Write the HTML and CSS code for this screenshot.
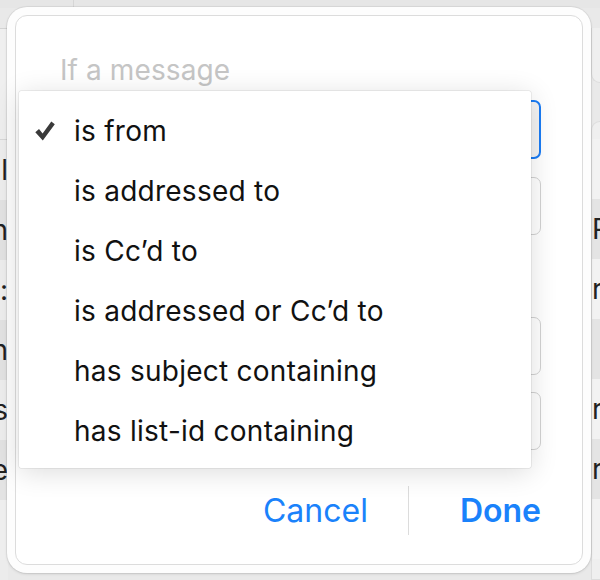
FILE: index.html
```html
<!DOCTYPE html>
<html>
<head>
<meta charset="utf-8">
<link rel="stylesheet" href="styles.css">
</head>
<body>
<div class="window">
  <div class="topbar"><div class="tb-left"></div><div class="tb-rest"></div></div>
  <div class="content">
    <div class="side left">
      <div class="head"></div>
      <div class="block"></div>
      <div class="row light"><span>.l</span></div>
      <div class="row dark"><span>n</span></div>
      <div class="row light"><span>n:</span></div>
      <div class="row dark"><span>n</span></div>
      <div class="row light"><span>s</span></div>
      <div class="row dark"><span>e</span></div>
      <div class="row light"><span></span></div>
    </div>
    <div class="mid"></div>
    <div class="side right">
      <div class="card top"></div>
      <div class="card body">
        <div class="row light"><span></span></div>
        <div class="row dark"><span>Re</span></div>
        <div class="row light"><span>r</span></div>
        <div class="row dark"><span></span></div>
        <div class="row light"><span>r</span></div>
        <div class="row dark"><span>rk</span></div>
        <div class="row light"><span></span></div>
      </div>
    </div>
  </div>
</div>

<div class="dialog">
  <div class="panel">
    <div class="label">If a message</div>
    <div class="field focus f1"></div>
    <div class="field f2"></div>
    <div class="field f3"></div>
    <div class="field f4"></div>
    <div class="actions">
      <span class="btn cancel">Cancel</span>
      <span class="divider"></span>
      <span class="btn done">Done</span>
    </div>
  </div>
</div>

<div class="menu">
  <div class="item checked">
    <svg class="check" viewBox="0 0 20 20" width="20" height="20"><path d="M0.3 11.3 L4 8 L7.6 12.4 L16.3 0.6 L19.8 3.3 L7.8 19.6 Z" fill="#3a3a3a"/></svg>
    <span>is from</span>
  </div>
  <div class="item"><span class="nocheck"></span><span>is addressed to</span></div>
  <div class="item"><span class="nocheck"></span><span>is Cc’d to</span></div>
  <div class="item"><span class="nocheck"></span><span>is addressed or Cc’d to</span></div>
  <div class="item"><span class="nocheck"></span><span>has subject containing</span></div>
  <div class="item"><span class="nocheck"></span><span>has list-id containing</span></div>
</div>
</body>
</html>
```

FILE: styles.css
```css
html, body {
  margin: 0;
  padding: 0;
}
body {
  width: 600px;
  height: 580px;
  overflow: hidden;
  position: relative;
  background: #e9e9e9;
  font-family: Inter, "Noto Sans", sans-serif;
}

.window {
  display: flex;
  flex-direction: column;
  height: 580px;
}
.topbar {
  height: 8px;
  display: flex;
  background: #e6e6e6;
}
.tb-left {
  width: 73px;
  border-right: 1px solid #d6d6d6;
}
.tb-rest { flex: 1; }

.content {
  flex: 1;
  display: flex;
}
.side {
  display: flex;
  flex-direction: column;
  overflow: hidden;
}
.side.left {
  width: 8px;
  background: #ececec;
}
.side.left .head {
  height: 20px;
  border-bottom: 1px solid #d3d3d3;
  background: #e9e9e9;
}
.side.left .block {
  height: 110px;
  border-bottom: 1px solid #d8d8d8;
  background: #efefef;
}
.row {
  height: 60px;
  flex: none;
  display: flex;
  align-items: center;
  white-space: nowrap;
  font-size: 28px;
  color: #222;
}
.row.light { background: #eeeeee; }
.row.dark { background: #e3e3e3; }
.side.left .row { justify-content: flex-end; }

.mid { flex: 1; }

.side.right {
  width: 9px;
  padding-left: 2px;
}
.card {
  background: #efefef;
  border: 1px solid #dcdcdc;
  border-right: none;
}
.card.top {
  margin-top: 20px;
  height: 54px;
  border-radius: 0 0 0 10px;
  border-top: none;
}
.card.body {
  margin-top: 38px;
  border-radius: 10px 0 0 0;
  flex: 1;
  overflow: hidden;
  padding-top: 17px;
}
.card .row.light { background: #f2f2f2; }
.card .row.dark { background: #e4e4e4; }

/* dialog */
.dialog {
  position: absolute;
  left: 7px;
  top: 7px;
  width: 584px;
  height: 566px;
  box-sizing: border-box;
  padding: 8px;
  background: #fdfdfd;
  border-radius: 20px;
  box-shadow: 0 0 0 1px rgba(0,0,0,0.05), 0 1px 3px rgba(0,0,0,0.12);
}
.panel {
  height: 100%;
  box-sizing: border-box;
  border: 1px solid #dcdcdc;
  border-radius: 12px;
  background: #fff;
  padding: 37px 41px 0 44px;
  display: flex;
  flex-direction: column;
}
.label {
  height: 34px;
  line-height: 34px;
  font-size: 28px;
  color: #c5c5c5;
  letter-spacing: 0.1px;
}
.field {
  box-sizing: border-box;
  border: 1px solid #d2d2d2;
  border-radius: 7px;
  background: #fff;
  height: 58px;
}
.field.focus {
  border: 2.5px solid #1a7cf5;
  height: 59px;
  margin-top: 13px;
  background: #f4f4f4;
}
.f2 { margin-top: 18px; }
.f3 { margin-top: 82px; }
.f4 { margin-top: 17px; }

.actions {
  margin-top: 36px;
  height: 49px;
  display: flex;
  justify-content: flex-end;
  align-items: center;
}
.btn {
  font-size: 32px;
  color: #1a82fb;
  line-height: 38px;
}
.btn.done { font-weight: 600; }
.divider {
  width: 1px;
  height: 49px;
  background: #dcdcdc;
  margin: 0 51px 0 40px;
}

/* popup menu */
.menu {
  position: absolute;
  left: 19px;
  top: 91px;
  width: 512px;
  height: 377px;
  box-sizing: border-box;
  padding: 10px 0 7px;
  background: #fff;
  border-radius: 2px;
  box-shadow: 0 0 0 0.5px rgba(0,0,0,0.12), 0 4px 28px rgba(0,0,0,0.14);
}
.item {
  height: 60px;
  display: flex;
  align-items: center;
  padding-left: 16px;
  font-size: 28px;
  letter-spacing: 0.25px;
  color: #111;
  white-space: nowrap;
}
.check, .nocheck {
  width: 20px;
  height: 20px;
  flex: none;
  margin-right: 19px;
  display: block;
}
```
